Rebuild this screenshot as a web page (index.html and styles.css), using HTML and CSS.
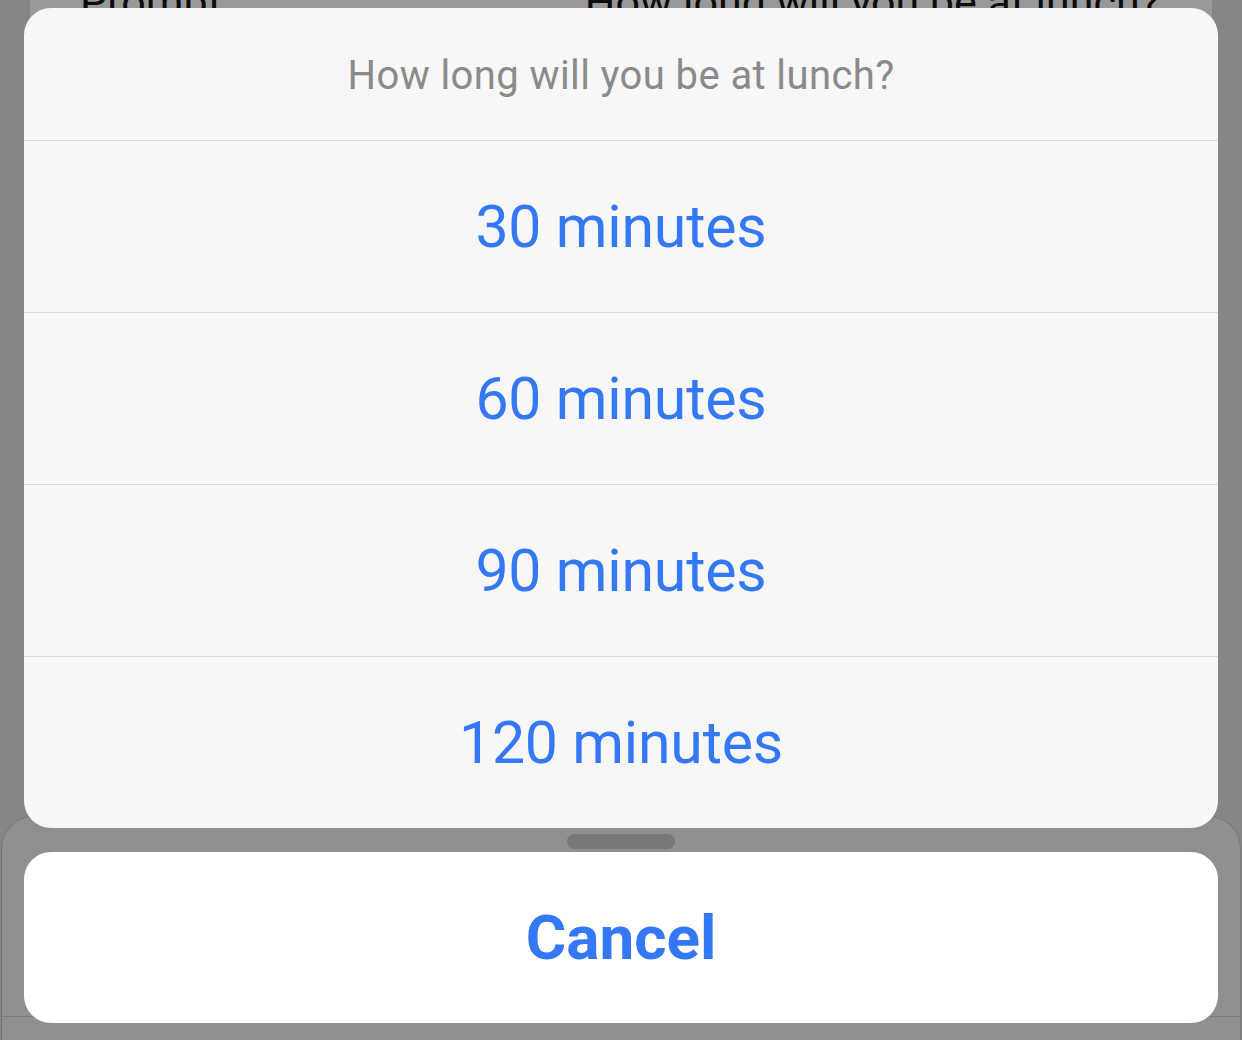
FILE: index.html
```html
<!DOCTYPE html>
<html lang="en">
<head>
<meta charset="utf-8">
<title>Prompt</title>
<link rel="stylesheet" href="styles.css">
</head>
<body>
  <div class="page">
    <div class="bg-top">
      <div class="prompt-card">
        <span class="prompt-label">Prompt</span>
        <span class="prompt-value">How long will you be at lunch?</span>
      </div>
    </div>
    <div class="bg-sheet">
      <div class="grabber"></div>
      <div class="bg-sheet-line"></div>
    </div>
  </div>

  <div class="action-sheet">
    <div class="group">
      <div class="title">How long will you be at lunch?</div>
      <div class="option">30 minutes</div>
      <div class="option">60 minutes</div>
      <div class="option">90 minutes</div>
      <div class="option">120 minutes</div>
    </div>
    <div class="cancel">Cancel</div>
  </div>
</body>
</html>
```
FILE: styles.css
```css
html, body {
  margin: 0;
  padding: 0;
}
body {
  width: 1242px;
  height: 1040px;
  overflow: hidden;
  background: #868686;
  font-family: Roboto, "Liberation Sans", sans-serif;
  position: relative;
}
.page {
  display: flex;
  flex-direction: column;
  height: 1040px;
}
.bg-top {
  height: 816px;
  padding: 0 30px;
  box-sizing: border-box;
  background: linear-gradient(#999999, #999999) 30px 0 / 1182px 816px no-repeat, #868686;
}
.prompt-card {
  display: flex;
  justify-content: space-between;
  align-items: flex-end;
  box-sizing: border-box;
  padding: 0 52px 0 50px;
  height: 24px;
  overflow: hidden;
}
.prompt-card span {
  font-size: 43px;
  line-height: 43px;
  color: #0c0c0c;
  margin-bottom: 0;
}
.bg-sheet {
  flex: 1;
  margin: 0 1px;
  background: #8f8f8f;
  border: 1px solid #767676;
  border-bottom: none;
  border-radius: 32px 32px 0 0;
  display: flex;
  flex-direction: column;
  align-items: center;
}
.grabber {
  width: 108px;
  height: 15px;
  border-radius: 8px;
  background: #787878;
  margin-top: 17px;
}
.bg-sheet-line {
  margin-top: auto;
  margin-bottom: 23px;
  align-self: stretch;
  height: 1px;
  background: #7a7a7a;
}

.action-sheet {
  position: absolute;
  left: 24px;
  top: 8px;
  width: 1194px;
  display: flex;
  flex-direction: column;
  gap: 24px;
}
.group {
  background: #f7f7f7;
  border-radius: 27px;
  overflow: hidden;
  display: flex;
  flex-direction: column;
}
.title {
  height: 132px;
  display: flex;
  align-items: center;
  justify-content: center;
  font-size: 40px;
  color: #8a8a8a;
  letter-spacing: 0.4px;
  padding-top: 2px;
  box-sizing: border-box;
}
.option {
  height: 171px;
  border-top: 1px solid #dadada;
  display: flex;
  align-items: center;
  justify-content: center;
  font-size: 59px;
  letter-spacing: -0.2px;
  color: #3478f6;
}
.cancel {
  height: 171px;
  background: #ffffff;
  border-radius: 27px;
  display: flex;
  align-items: center;
  justify-content: center;
  font-size: 62px;
  font-weight: 700;
  color: #3478f6;
}
```
